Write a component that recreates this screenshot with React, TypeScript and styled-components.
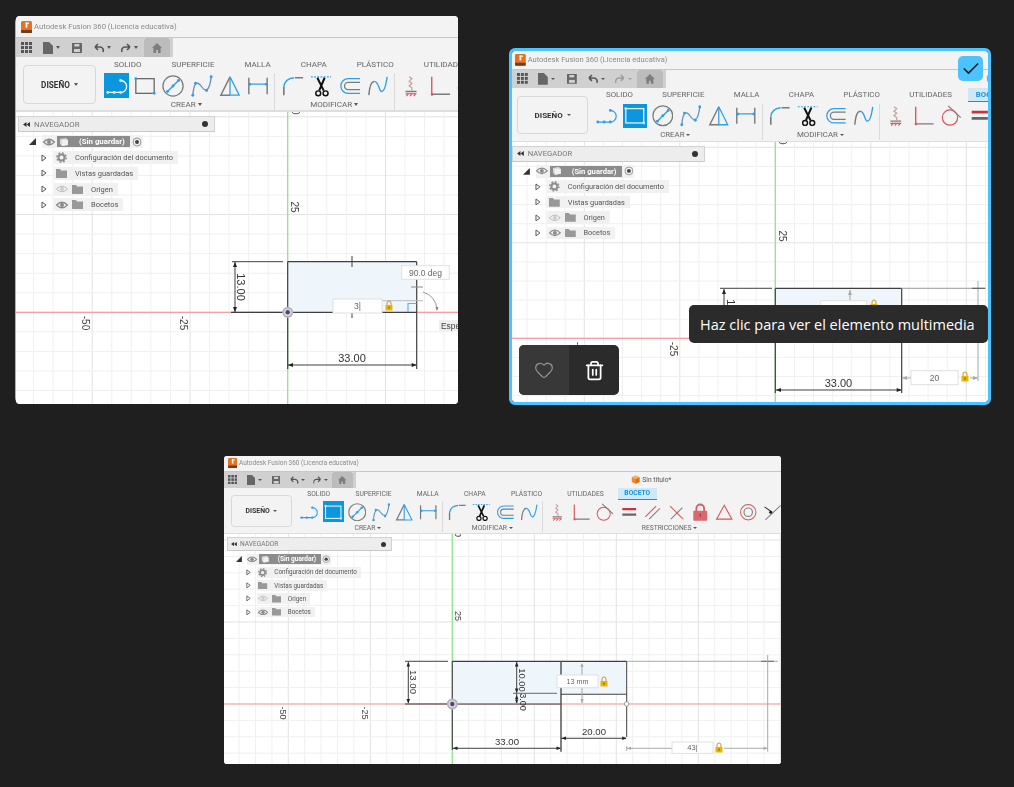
import React from "react";
import styled, { createGlobalStyle } from "styled-components";
import { Check, Heart, Trash2 } from "lucide-react";

const Global = createGlobalStyle`
  html, body { margin: 0; padding: 0; background: #1f1f1f; }
  body { font-family: Roboto, "Liberation Sans", Arial, sans-serif; }
`;

const Page = styled.div`
  width: 1014px;
  height: 787px;
  box-sizing: border-box;
  padding: 16px 0 0 15px;
  overflow: hidden;
`;
const TopRow = styled.div`
  display: flex;
  align-items: flex-start;
`;
const BottomRow = styled.div`
  margin: 51px 0 0 209px;
`;
const Card = styled.div<{ $w: number; $h: number; $selected?: boolean; $edge?: boolean; $ml?: number; $mt?: number }>`
  position: relative;
  flex: none;
  box-sizing: border-box;
  width: ${(p) => p.$w}px;
  height: ${(p) => p.$h}px;
  margin-left: ${(p) => p.$ml ?? 0}px;
  margin-top: ${(p) => p.$mt ?? 0}px;
  border-radius: 6px;
  border: ${(p) => (p.$selected ? "3px solid #4cc2ff" : "none")};
  ${(p) => (p.$edge ? "border-left: 1px solid #aebf83;" : "")}
`;
const Frame = styled.div<{ $s: number; $w: number; $h: number }>`
  zoom: ${(p) => p.$s};
  width: ${(p) => p.$w}px;
  height: ${(p) => p.$h}px;
  display: flex;
  flex-direction: column;
  overflow: hidden;
  background: #fff;
  border-radius: 4px;
  filter: blur(0.4px);
`;
const TitleBar = styled.div<{ $h: number; $pl: number }>`
  flex: none;
  height: ${(p) => p.$h}px;
  box-sizing: border-box;
  display: flex;
  align-items: center;
  gap: 2px;
  padding-left: ${(p) => p.$pl}px;
  background: #f3f3f3;
  border-bottom: 1px solid #c6c6c6;
  color: #8a8a8a;
  font-size: 7.7px;
  white-space: nowrap;
`;
const QuickBar = styled.div`
  flex: none;
  height: 19px;
  display: flex;
  background: #f3f3f3;
`;
const QuickTools = styled.div`
  width: 128px;
  height: 19px;
  flex: none;
  display: flex;
  align-items: center;
  background: #d0d0d0;
  box-sizing: border-box;
  padding-left: 5px;
`;
const HomeTab = styled.div`
  width: 26px;
  flex: none;
  display: flex;
  align-items: center;
  justify-content: center;
  background: #bcbcbc;
  border-radius: 2px 2px 0 0;
`;
const HomeGap = styled.div`
  width: 3px;
  flex: none;
  background: #d0d0d0;
`;
const DocTitle = styled.div`
  margin-left: 327px;
  display: flex;
  align-items: center;
  gap: 3px;
  white-space: nowrap;
  color: #555;
  font-size: 8px;
`;
const QuickSlot = styled.span<{ $ml?: number; $faded?: boolean }>`
  display: inline-flex;
  align-items: center;
  gap: 3px;
  margin-left: ${(p) => p.$ml ?? 0}px;
  opacity: ${(p) => (p.$faded ? 0.4 : 1)};
`;
const TinyCaret = styled.i`
  display: block;
  width: 0;
  height: 0;
  border-left: 2.5px solid transparent;
  border-right: 2.5px solid transparent;
  border-top: 3px solid #555;
`;
const Ribbon = styled.div`
  flex: none;
  height: 55px;
  box-sizing: border-box;
  display: flex;
  background: #f3f3f3;
  border-bottom: 2px solid #dedede;
`;
const DesignButton = styled.div<{ $ml: number; $mr: number }>`
  flex: none;
  box-sizing: border-box;
  width: 73px;
  height: 39px;
  margin: 8px ${(p) => p.$mr}px 0 ${(p) => p.$ml}px;
  display: flex;
  align-items: center;
  justify-content: center;
  gap: 4px;
  border: 1px solid #d8d8d8;
  border-radius: 4px;
  color: #333;
  font-size: 8.2px;
  font-weight: 700;
`;
const RibbonBody = styled.div`
  flex: 1;
  min-width: 0;
  display: flex;
  flex-direction: column;
`;
const Tabs = styled.div<{ $ml: number }>`
  height: 15px;
  display: flex;
  align-items: stretch;
  margin-left: ${(p) => p.$ml}px;
  white-space: nowrap;
`;
const Tab = styled.div<{ $active?: boolean }>`
  flex: none;
  display: flex;
  align-items: center;
  box-sizing: border-box;
  height: 14px;
  padding: 0 ${(p) => (p.$active ? "7.5px" : "15px")};
  ${(p) => (p.$active ? "margin-left: 2px;" : "")}
  font-size: 8px;
  color: ${(p) => (p.$active ? "#1493dc" : "#666")};
  font-weight: ${(p) => (p.$active ? 700 : 400)};
  background: ${(p) => (p.$active ? "#cfe8f7" : "transparent")};
  border-bottom: ${(p) => (p.$active ? "2px solid #1493dc" : "none")};
`;
const Tools = styled.div<{ $shift: number }>`
  display: flex;
  margin-left: ${(p) => p.$shift}px;
  margin-top: 1px;
`;
const Group = styled.div<{ $pl?: number; $sep?: boolean; $cells: number }>`
  flex: none;
  width: ${(p) => p.$cells * 28.4}px;
  padding-left: ${(p) => p.$pl ?? 0}px;
  ${(p) => (p.$sep ? "border-right: 1px solid #dadada;" : "")}
  height: 37px;
`;
const IconRow = styled.div`
  display: flex;
  height: 25px;
`;
const ToolCell = styled.div<{ $active?: boolean }>`
  flex: none;
  width: 25px;
  height: 25px;
  margin-right: 3.4px;
  display: flex;
  align-items: center;
  justify-content: center;
  background: ${(p) => (p.$active ? "#0b96dd" : "transparent")};
`;
const GroupLabel = styled.div<{ $pr?: number; $pl?: number }>`
  display: flex;
  align-items: center;
  justify-content: center;
  gap: 2px;
  height: 13px;
  padding-right: ${(p) => p.$pr ?? 0}px;
  padding-left: ${(p) => p.$pl ?? 0}px;
  font-size: 8px;
  color: #666;
`;
const Viewport = styled.div`
  position: relative;
  flex: 1;
  min-height: 0;
  overflow: hidden;
  background: #fff;
`;
const SketchSvg = styled.svg`
  position: absolute;
  inset: 0;
  width: 100%;
  height: 100%;
`;
const Navigator = styled.div<{ $left: number }>`
  position: absolute;
  left: ${(p) => p.$left}px;
  top: 4px;
  width: 197px;
`;
const NavHeader = styled.div`
  box-sizing: border-box;
  height: 16px;
  display: flex;
  align-items: center;
  padding: 0 6px 0 4px;
  gap: 4px;
  background: #ededed;
  border: 1px solid #d2d2d2;
  border-bottom-color: #c8c8c8;
  color: #777;
  font-size: 7.8px;
`;
const NavTitle = styled.span`
  flex: 1;
`;
const NavPin = styled.i`
  width: 6px;
  height: 6px;
  border-radius: 50%;
  background: #333;
`;
const Tree = styled.div`
  margin-top: 2px;
`;
const TreeRow = styled.div<{ $pl: number }>`
  height: 15.75px;
  display: flex;
  align-items: center;
  padding-left: ${(p) => p.$pl}px;
`;
const Chip = styled.div<{ $ml: number; $pad?: number }>`
  height: 13px;
  display: flex;
  align-items: center;
  margin-left: ${(p) => p.$ml}px;
  padding: 0 ${(p) => p.$pad ?? 5}px 0 ${(p) => p.$pad ?? 2}px;
  background: #f1f1f1;
  color: #555;
  font-size: 7.5px;
  white-space: nowrap;
`;
const ChipText = styled.span<{ $ml: number }>`
  display: inline-flex;
  margin-left: ${(p) => p.$ml}px;
`;
const RootBox = styled.div`
  width: 73px;
  height: 11px;
  margin: 0 2px;
  box-sizing: border-box;
  padding-left: 2px;
  display: flex;
  align-items: center;
  background: #8c8c8c;
  color: #fff;
  font-size: 7.8px;
  font-weight: 700;
`;
const RootText = styled.span`
  margin-left: 10px;
`;
const CheckBadge = styled.div`
  position: absolute;
  left: 446px;
  top: 5px;
  width: 25px;
  height: 25px;
  border-radius: 5px;
  background: #4cc2ff;
  display: flex;
  align-items: center;
  justify-content: center;
  color: #10212b;
`;
const Tooltip = styled.div`
  position: absolute;
  left: 177px;
  top: 254px;
  width: 299px;
  height: 38px;
  box-sizing: border-box;
  border-radius: 5px;
  background: #2b2b2b;
  color: #fff;
  display: flex;
  align-items: center;
  padding-left: 11px;
  font-family: "Open Sans", "Noto Sans", sans-serif;
  font-size: 14.5px;
  white-space: nowrap;
`;
const ActionBar = styled.div`
  position: absolute;
  left: 7px;
  top: 294px;
  width: 100px;
  height: 50px;
  display: flex;
  border-radius: 5px;
  overflow: hidden;
  background: #2b2b2b;
`;
const ActionButton = styled.div<{ $tone?: boolean }>`
  width: 50px;
  display: flex;
  align-items: center;
  justify-content: center;
  background: ${(p) => (p.$tone ? "#383838" : "transparent")};
  color: ${(p) => (p.$tone ? "#8f8f8f" : "#fff")};
`;

const B = "#2f9fe8";
const G = "#7b7b7b";
const R = "#d9545b";

const Dots = ({ pts, c = B }: { pts: number[][]; c?: string }) => (
  <>
    {pts.map(([x, y], i) => (
      <circle key={i} cx={x} cy={y} r={1.6} fill={c} />
    ))}
  </>
);
const I = ({ children, size = 22 }: { children: React.ReactNode; size?: number }) => (
  <svg width={size} height={size} viewBox="0 0 24 24" fill="none" strokeWidth={1.4}>
    {children}
  </svg>
);
const LineTool = ({ on }: { on?: boolean }) => (
  <I>
    <path d="M2 19 H16 a6.5 6.5 0 0 0 0-13" stroke={on ? "#fff" : B} />
    <Dots pts={[[2, 19], [9, 19], [16, 19], [16, 6]]} c={on ? "#cdeaff" : B} />
  </I>
);
const RectTool = ({ on }: { on?: boolean }) => (
  <I>
    <rect x="2" y="4" width="20" height="16" stroke={on ? "#e4f4ff" : "#666"} />
    <Dots pts={[[2, 4], [22, 20]]} c={on ? "#bfe6ff" : B} />
  </I>
);
const CircleTool = () => (
  <I>
    <circle cx="12" cy="12" r="11" stroke={G} />
    <path d="M6 18 L18 6" stroke={B} strokeWidth={1.6} />
    <Dots pts={[[6, 18], [12, 12], [18, 6]]} />
  </I>
);
const SplineTool = () => (
  <I>
    <path d="M2 22 C3 8 7 6 11 12 S 20 20 22 2" stroke="#5f8fb5" />
    <Dots pts={[[2, 22], [5, 9], [17, 17], [22, 2]]} />
  </I>
);
const TriTool = () => (
  <I>
    <path d="M12 2 L2 22 H12" stroke={G} strokeWidth={1.6} />
    <path d="M12 2 L22 22 H12 Z" stroke={B} strokeWidth={1.4} />
  </I>
);
const HTool = () => (
  <I>
    <path d="M2 3 V21 M22 3 V21" stroke={G} strokeWidth={1.6} />
    <path d="M2 10 H22" stroke={B} />
    <Dots pts={[[3, 10], [21, 10]]} />
  </I>
);
const FilletTool = () => (
  <I>
    <path d="M2 22 V13" stroke={G} strokeWidth={1.8} />
    <path d="M2 13 Q3 4 13 3" stroke={B} strokeWidth={1.6} />
    <path d="M14 3 H23" stroke={G} strokeWidth={1.6} />
  </I>
);
const ScissorsTool = () => (
  <I>
    <path d="M1 2 H23" stroke={B} strokeDasharray="2 1.5" strokeWidth={1.2} />
    <path d="M8 3 L15 17 M16 3 L10 17" stroke="#111" strokeWidth={2.2} />
    <circle cx="9" cy="20" r="2.7" stroke="#111" strokeWidth={1.6} />
    <circle cx="17" cy="20" r="2.7" stroke="#111" strokeWidth={1.6} />
  </I>
);
const OffsetTool = () => (
  <I>
    <path d="M23 4 H10 a8 8 0 0 0 0 16 H23" stroke={B} strokeWidth={1.4} />
    <path d="M23 8 H10 a4 4 0 0 0 0 8 H23" stroke={G} strokeWidth={1.4} />
  </I>
);
const CurveTool = () => (
  <I>
    <path d="M2 22 C3 10 5 7 8 7" stroke={G} strokeWidth={1.6} />
    <path d="M8 7 C13 7 13 18 16 18 C20 18 21 8 22 2" stroke={B} strokeWidth={1.5} />
  </I>
);
const FixTool = () => (
  <I>
    <path d="M10 2 L13 4 L10 7 L13 9 L10 12 L13 14 V17" stroke="#c9a0a0" strokeWidth={1.4} />
    <path d="M6 18 H18" stroke={G} strokeWidth={1.4} />
    <path d="M6 20.5 H18 M7 23 L9 20.5 M11 23 L13 20.5 M15 23 L17 20.5" stroke={R} strokeWidth={1.2} />
  </I>
);
const CoincidentTool = () => (
  <I>
    <path d="M3 2 V21" stroke={R} strokeWidth={1.5} />
    <path d="M3 21 H23" stroke={G} strokeWidth={1.5} />
    <rect x="2" y="20" width="2.4" height="2.4" fill={R} />
  </I>
);
const TangentTool = () => (
  <I>
    <circle cx="10" cy="14" r="8.5" stroke={R} strokeWidth={1.3} />
    <path d="M8 1 L22 14" stroke={G} strokeWidth={1.3} />
  </I>
);
const EqualTool = () => (
  <I>
    <path d="M3 8 H21" stroke="#c8353d" strokeWidth={3} />
    <path d="M3 15 H21" stroke="#666" strokeWidth={3} />
  </I>
);
const ParallelTool = () => (
  <I>
    <path d="M3 18 L17 4" stroke={R} strokeWidth={1.3} />
    <path d="M8 21 L22 7" stroke={G} strokeWidth={1.3} />
  </I>
);
const PerpTool = () => (
  <I>
    <path d="M4 4 L21 21" stroke={R} strokeWidth={1.3} />
    <path d="M5 21 L20 6" stroke={G} strokeWidth={1.3} />
  </I>
);
const LockTool = () => (
  <I>
    <path d="M7 11 V7 a5 5 0 0 1 10 0 V11" stroke="#d0606a" strokeWidth={2.4} />
    <rect x="3" y="10" width="18" height="13" rx="1" fill="#d9686f" />
    <path d="M12 14 V18" stroke="#8d2f36" strokeWidth={1.3} />
  </I>
);
const TriangleTool = () => (
  <I>
    <path d="M12 3 L22 21 H2 Z" stroke={R} strokeWidth={1.4} />
  </I>
);
const ConcentricTool = () => (
  <I>
    <circle cx="12" cy="12" r="10" stroke={R} strokeWidth={1.3} />
    <circle cx="12" cy="12" r="5.5" stroke="#888" strokeWidth={1.6} />
  </I>
);
const MidTool = () => (
  <I>
    <path d="M2 5 L12 12" stroke="#333" strokeWidth={1.3} />
    <path d="M3 22 L23 3" stroke={G} strokeWidth={1.3} />
    <circle cx="10" cy="12" r="2" fill="#222" />
  </I>
);

const DocCube = () => (
  <svg width="11" height="11" viewBox="0 0 12 12">
    <path d="M6 0.5 L11 3 V9 L6 11.5 L1 9 V3 Z" fill="#f08a2c" />
    <path d="M6 0.5 L11 3 L6 5.5 L1 3 Z" fill="#f8b066" />
    <path d="M6 5.5 L11 3 V9 L6 11.5 Z" fill="#d96f12" />
  </svg>
);
const FusionLogo = () => (
  <svg width="11" height="12" viewBox="0 0 11 12">
    <rect width="11" height="12" rx="1.5" fill="#e8701f" />
    <rect y="9" width="11" height="3" fill="#3a2a20" opacity="0.7" />
    <rect x="4.6" y="1.6" width="1.8" height="5" fill="#fff" />
    <rect x="4.6" y="1.6" width="3.4" height="1.3" fill="#fff" />
  </svg>
);
const GridIcon = () => (
  <svg width="11" height="11" viewBox="0 0 11 11" fill="#555">
    {[0, 4, 8].map((x) => [0, 4, 8].map((y) => <rect key={x + "-" + y} x={x} y={y} width="3" height="3" />))}
  </svg>
);
const FileIcon = () => (
  <svg width="10" height="12" viewBox="0 0 10 12"><path d="M0 0 H6 L10 4 V12 H0 Z" fill="#666" /></svg>
);
const SaveIcon = () => (
  <svg width="10" height="10" viewBox="0 0 10 10" fill="none"><path d="M0 0 H10 V10 H0 Z" fill="#666" /><rect x="2.4" y="1" width="5" height="2.5" fill="#d0d0d0" /><rect x="2" y="6" width="6" height="3" fill="#d0d0d0" /></svg>
);
const UndoIcon = ({ flip }: { flip?: boolean }) => (
  <svg width="10" height="10" viewBox="0 0 10 10" fill="none" stroke="#555" strokeWidth="1.6" style={flip ? { transform: "scaleX(-1)" } : undefined}>
    <path d="M1 4 L4 1 M1 4 L4 7 M1 4 H6 a3.5 3.5 0 0 1 3 5" />
  </svg>
);
const HomeIcon = () => (
  <svg width="10" height="10" viewBox="0 0 10 10"><path d="M5 0 L10 5 H8.6 V10 H6 V7 H4 V10 H1.4 V5 H0 Z" fill="#7d7d7d" /></svg>
);
const NavBack = () => (
  <svg width="7" height="5" viewBox="0 0 7 5"><path d="M3.5 0 L0 2.5 L3.5 5 Z M7 0 L3.5 2.5 L7 5 Z" fill="#333" /></svg>
);
const RootCaret = () => (
  <svg width="7" height="7" viewBox="0 0 7 7"><path d="M7 0 V7 H0 Z" fill="#333" /></svg>
);
const Chevron = () => (
  <svg width="6" height="8" viewBox="0 0 6 8" fill="none"><path d="M1 1 L5 4 L1 7 Z" stroke="#555" /></svg>
);
const Eye = ({ off }: { off?: boolean }) => (
  <svg width="12" height="8" viewBox="0 0 12 8" fill="none">
    <path d="M0.5 4 Q6 -1.5 11.5 4 Q6 9.5 0.5 4 Z" stroke={off ? "#bbb" : "#888"} strokeWidth={off ? 1 : 1.2} />
    <circle cx="6" cy="4" r="2" fill={off ? "#ccc" : "#888"} />
  </svg>
);
const Folder = () => (
  <svg width="11" height="9" viewBox="0 0 11 9"><path d="M0 0 H4 L5 1.5 H11 V9 H0 Z" fill="#999" /></svg>
);
const Gear = () => (
  <svg width="11" height="11" viewBox="0 0 11 11" fill="none"><circle cx="5.5" cy="5.5" r="3" stroke="#8f8f8f" strokeWidth="2" /><circle cx="5.5" cy="5.5" r="4.6" stroke="#8f8f8f" strokeWidth="1.6" strokeDasharray="1.8 1.8" /></svg>
);
const RootCube = () => (
  <svg width="10" height="10" viewBox="0 0 10 10"><path d="M1 2 L7 1 L9 3 V8 L3 9 L1 7 Z" fill="#d9d9d9" /><path d="M3 9 V3 L9 3 V8 Z" fill="#f1f1f1" /></svg>
);
const Radio = () => (
  <svg width="10" height="10" viewBox="0 0 10 10" fill="none"><circle cx="5" cy="5" r="4" stroke="#999" /><circle cx="5" cy="5" r="2" fill="#444" /></svg>
);

const TAB_NAMES = ["SOLIDO", "SUPERFICIE", "MALLA", "CHAPA", "PLÁSTICO", "UTILIDADES"];

type BarProps = { active: "line" | "rect"; tabsMl: number; shift: number; dl: number; dr: number };
const Toolbar = ({ active, tabsMl, shift, dl, dr }: BarProps) => (
  <Ribbon>
    <DesignButton $ml={dl} $mr={dr}>DISEÑO <TinyCaret /></DesignButton>
    <RibbonBody>
      <Tabs $ml={tabsMl}>
        {TAB_NAMES.map((t) => (
          <Tab key={t}>{t}</Tab>
        ))}
        <Tab $active>BOCETO</Tab>
      </Tabs>
      <Tools $shift={shift}>
        <Group $cells={6} $sep>
          <IconRow>
            <ToolCell $active={active === "line"}><LineTool on={active === "line"} /></ToolCell>
            <ToolCell $active={active === "rect"}><RectTool on={active === "rect"} /></ToolCell>
            <ToolCell><CircleTool /></ToolCell>
            <ToolCell><SplineTool /></ToolCell>
            <ToolCell><TriTool /></ToolCell>
            <ToolCell><HTool /></ToolCell>
          </IconRow>
          <GroupLabel $pr={6}>CREAR <TinyCaret /></GroupLabel>
        </Group>
        <Group $cells={4} $pl={5} $sep>
          <IconRow>
            <ToolCell><FilletTool /></ToolCell>
            <ToolCell><ScissorsTool /></ToolCell>
            <ToolCell><OffsetTool /></ToolCell>
            <ToolCell><CurveTool /></ToolCell>
          </IconRow>
          <GroupLabel $pr={6}>MODIFICAR <TinyCaret /></GroupLabel>
        </Group>
        <Group $cells={10} $pl={4}>
          <IconRow>
            <ToolCell><FixTool /></ToolCell>
            <ToolCell><CoincidentTool /></ToolCell>
            <ToolCell><TangentTool /></ToolCell>
            <ToolCell><EqualTool /></ToolCell>
            <ToolCell><ParallelTool /></ToolCell>
            <ToolCell><PerpTool /></ToolCell>
            <ToolCell><LockTool /></ToolCell>
            <ToolCell><TriangleTool /></ToolCell>
            <ToolCell><ConcentricTool /></ToolCell>
            <ToolCell><MidTool /></ToolCell>
          </IconRow>
          <GroupLabel $pl={8}>RESTRICCIONES <TinyCaret /></GroupLabel>
        </Group>
      </Tools>
    </RibbonBody>
  </Ribbon>
);

const NavTree = ({ left }: { left: number }) => (
  <Navigator $left={left}>
    <NavHeader><NavBack /><NavTitle>NAVEGADOR</NavTitle><NavPin /></NavHeader>
    <Tree>
      <TreeRow $pl={11}>
        <RootCaret />
        <Chip $ml={6} $pad={1}>
          <Eye /><RootBox><RootCube /><RootText>(Sin guardar)</RootText></RootBox><Radio />
        </Chip>
      </TreeRow>
      <TreeRow $pl={23}><Chevron /><Chip $ml={7}><Gear /><ChipText $ml={8}>Configuración del documento</ChipText></Chip></TreeRow>
      <TreeRow $pl={23}><Chevron /><Chip $ml={7}><Folder /><ChipText $ml={8}>Vistas guardadas</ChipText></Chip></TreeRow>
      <TreeRow $pl={23}><Chevron /><Chip $ml={7}><Eye off /><ChipText $ml={4}><Folder /></ChipText><ChipText $ml={8}>Origen</ChipText></Chip></TreeRow>
      <TreeRow $pl={23}><Chevron /><Chip $ml={7}><Eye /><ChipText $ml={4}><Folder /></ChipText><ChipText $ml={8}>Bocetos</ChipText></Chip></TreeRow>
    </Tree>
  </Navigator>
);

const INK = "#3f3f3f";
const LIGHT = "#a8a8a8";

const GridLines = ({ ox, oy, d, x0, x1, y0, y1 }: { ox: number; oy: number; d: number; x0: number; x1: number; y0: number; y1: number }) => {
  const out: React.ReactNode[] = [];
  for (let i = -40; i <= 40; i++) {
    const x = ox + i * d;
    const y = oy + i * d;
    const c = i % 5 === 0 ? "#e2e2e2" : "#f0f0f0";
    if (x >= x0 && x <= x1) out.push(<line key={"v" + i} x1={x} x2={x} y1={y0} y2={y1} stroke={c} strokeWidth={1} />);
    if (y >= y0 && y <= y1) out.push(<line key={"h" + i} x1={x0} x2={x1} y1={y} y2={y} stroke={c} strokeWidth={1} />);
  }
  return (
    <>
      {out}
      <line x1={ox} x2={ox} y1={y0} y2={y1} stroke="#8fe08f" strokeWidth={1.2} />
      <line x1={x0} x2={x1} y1={oy} y2={oy} stroke="#f3a0a0" strokeWidth={1.2} />
    </>
  );
};
const Arr = ({ x, y, dir, c = "#222", s = 5 }: { x: number; y: number; dir: "l" | "r" | "u" | "d"; c?: string; s?: number }) => {
  const w = s * 0.4;
  const p = dir === "l" ? `${x},${y} ${x + s},${y - w} ${x + s},${y + w}`
    : dir === "r" ? `${x},${y} ${x - s},${y - w} ${x - s},${y + w}`
    : dir === "u" ? `${x},${y} ${x - w},${y + s} ${x + w},${y + s}`
    : `${x},${y} ${x - w},${y - s} ${x + w},${y - s}`;
  return <polygon points={p} fill={c} />;
};
const L = ({ a, b, c, d, col = INK, w = 1 }: { a: number; b: number; c: number; d: number; col?: string; w?: number }) => (
  <line x1={a} y1={b} x2={c} y2={d} stroke={col} strokeWidth={w} />
);
const Txt = ({ x, y, t, size = 10.5, col = "#333", rot }: { x: number; y: number; t: string; size?: number; col?: string; rot?: boolean }) => (
  <text x={x} y={y} fontSize={size} fill={col} textAnchor="middle" dominantBaseline="central" fontFamily="Liberation Sans, sans-serif" transform={rot ? `rotate(90 ${x} ${y})` : undefined}>{t}</text>
);
const Input = ({ x, y, w, h, t, size = 8.5 }: { x: number; y: number; w: number; h: number; t: string; size?: number }) => (
  <>
    <rect x={x} y={y} width={w} height={h} fill="#fff" stroke="#e0e0e0" />
    <Txt x={x + w / 2} y={y + h / 2} t={t} size={size} col="#666" />
  </>
);
const Padlock = ({ x, y }: { x: number; y: number }) => (
  <>
    <path d={`M${x - 2} ${y} v-2 a2 2 0 0 1 4 0 v2`} fill="none" stroke="#c99a10" strokeWidth={1} />
    <rect x={x - 3.5} y={y} width={7} height={5.5} rx={0.6} fill="#eab308" />
    <rect x={x - 0.5} y={y + 1.6} width={1} height={2} fill="#6a4d00" />
  </>
);
const Origin = ({ x, y }: { x: number; y: number }) => (
  <>
    <circle cx={x} cy={y} r={5.5} fill="#b5b5b5" />
    <circle cx={x} cy={y} r={3.6} fill="#dcdcdc" />
    <circle cx={x} cy={y} r={2.2} fill="#54408a" />
  </>
);

const SketchOne = () => (
  <SketchSvg viewBox="16 112 442 292" preserveAspectRatio="none">
    <GridLines ox={287.7} oy={312.3} d={19.55} x0={16} x1={458} y0={112} y1={404} />
    <Txt x={295} y={109} t="50" rot size={10} col="#444" />
    <Txt x={294} y={207} t="25" rot size={10} col="#444" />
    <Txt x={85} y={323} t="-50" rot size={10} col="#444" />
    <Txt x={183} y={323} t="-25" rot size={10} col="#444" />
    <rect x={287.7} y={261.7} width={129} height={50.6} fill="#eef6fc" />
    <L a={287.7} b={261.7} c={416.7} d={261.7} w={1.2} />
    <L a={287.7} b={261.7} c={287.7} d={369} w={1.2} />
    <L a={416.7} b={261.7} c={416.7} d={369} w={1.2} />
    <L a={231} b={312.3} c={416.7} d={312.3} w={1.2} />
    <L a={232} b={261.7} c={283} d={261.7} />
    <L a={235} b={262} c={235} d={312} />
    <Arr x={235} y={262} dir="u" />
    <Arr x={235} y={312} dir="d" />
    <Txt x={241} y={287} t="13.00" rot size={11} />
    <L a={288} b={365} c={416} d={365} />
    <Arr x={288} y={365} dir="l" />
    <Arr x={416.7} y={365} dir="r" />
    <Txt x={352} y={358} t="33.00" size={11} />
    <L a={352} b={256} c={352} d={267} />
    <L a={352} b={313} c={352} d={318} />
    <L a={411} b={287} c={423} d={287} col="#888" />
    <L a={382} b={300.7} c={423} d={300.7} col="#bbb" />
    <path d="M423 292 Q436 296 437 310" fill="none" stroke="#999" />
    <Arr x={437} y={311} dir="d" c="#888" s={4} />
    <path d="M408 312 V303.5 H416.5" fill="none" stroke="#56b6f2" strokeWidth={1.2} />
    <Input x={333} y={299} w={49} h={14} t="3|" />
    <Padlock x={389} y={305} />
    <Input x={401.7} y={265.7} w={47.6} h={13.6} t="90.0 deg" />
    <rect x={439} y={320} width={30} height={11} fill="#efefef" />
    <text x={441} y={328.5} fontSize={8.4} fill="#444" fontFamily="Liberation Sans, sans-serif">Espe</text>
    <Origin x={287.7} y={312.3} />
  </SketchSvg>
);
const SketchTwo = () => (
  <SketchSvg viewBox="512 142 476 260" preserveAspectRatio="none">
    <GridLines ox={775.3} oy={338.3} d={19.1} x0={512} x1={988} y0={142} y1={402} />
    <Txt x={782} y={139} t="50" rot size={10} col="#444" />
    <Txt x={782} y={236} t="25" rot size={10} col="#444" />
    <Txt x={578} y={349} t="-50" rot size={10} col="#444" />
    <Txt x={673} y={349} t="-25" rot size={10} col="#444" />
    <rect x={775.3} y={288.3} width={126.4} height={50} fill="#eef6fc" />
    <L a={775.3} b={288.3} c={901.7} d={288.3} w={1.2} />
    <L a={775.3} b={288.3} c={775.3} d={393} w={1.2} />
    <L a={901.7} b={288.3} c={901.7} d={393} w={1.2} />
    <L a={720} b={288.3} c={772} d={288.3} />
    <L a={724} b={289} c={724} d={340} />
    <Arr x={724} y={289} dir="u" />
    <Txt x={731} y={313} t="13.00" rot size={11} />
    <L a={901.7} b={288.3} c={985.7} d={288.3} col="#999" />
    <L a={978} b={281} c={978} d={381} col={LIGHT} />
    <L a={972} b={288.3} c={985} d={288.3} col="#555" />
    <rect x={820.7} y={300.7} width={46} height={14} fill="#fff" stroke="#e0e0e0" />
    <L a={850} b={290} c={850} d={300} col={LIGHT} />
    <Arr x={850} y={290} dir="u" c={LIGHT} />
    <Padlock x={874} y={304} />
    <L a={776} b={390} c={901} d={390} />
    <Arr x={776} y={390} dir="l" />
    <Arr x={901.7} y={390} dir="r" />
    <Txt x={838.5} y={382.7} t="33.00" size={11} />
    <L a={902} b={378} c={911} d={378} col={LIGHT} />
    <Arr x={902} y={378} dir="l" c={LIGHT} />
    <Input x={911} y={370.7} w={47} h={14} t="20" />
    <Padlock x={965} y={376} />
    <L a={970} b={378} c={978} d={378} col={LIGHT} />
    <Arr x={978} y={378} dir="r" c={LIGHT} />
  </SketchSvg>
);
const SketchThree = () => (
  <SketchSvg viewBox="224 534 557 230" preserveAspectRatio="none">
    <GridLines ox={452.3} oy={704} d={16.4} x0={224} x1={781} y0={534} y1={764} />
    <Txt x={458} y={532} t="50" rot size={9} col="#444" />
    <Txt x={458} y={616} t="25" rot size={9} col="#444" />
    <Txt x={283} y={713} t="-50" rot size={9} col="#444" />
    <Txt x={365} y={713} t="-25" rot size={9} col="#444" />
    <rect x={452.3} y={661.3} width={108.7} height={42.7} fill="#eef6fc" />
    <rect x={561} y={661.3} width={65.7} height={33} fill="#eef6fc" />
    <L a={452.3} b={661.3} c={626.7} d={661.3} w={1.2} />
    <L a={452.3} b={704} c={561} d={704} w={1.2} />
    <L a={452.3} b={661.3} c={452.3} d={750} w={1.1} />
    <L a={561} b={661.3} c={561} d={751.7} col="#555" w={1.5} />
    <L a={626.7} b={661.3} c={626.7} d={737} w={1} />
    <L a={626.7} b={746} c={626.7} d={751} col={LIGHT} />
    <L a={561} b={694.3} c={626.7} d={694.3} w={1.1} />
    <L a={627} b={661.3} c={778} d={661.3} col={LIGHT} />
    <L a={761} b={661.3} c={774} d={661.3} col="#666" />
    <L a={767.7} b={655} c={767.7} d={751.7} col={LIGHT} />
    <L a={405} b={661.3} c={448} d={661.3} />
    <L a={405} b={704} c={452} d={704} />
    <L a={408.3} b={662} c={408.3} d={703} />
    <Arr x={408.3} y={662} dir="u" s={4.5} />
    <Arr x={408.3} y={703.5} dir="d" s={4.5} />
    <Txt x={413.5} y={682} t="13.00" rot size={9.6} />
    <L a={516.7} b={662} c={516.7} d={703} />
    <Arr x={516.7} y={662} dir="u" s={4.5} />
    <Arr x={516.7} y={693} dir="d" s={4.5} />
    <Arr x={516.7} y={695} dir="u" s={4} />
    <Arr x={516.7} y={703.5} dir="d" s={4} />
    <L a={513} b={693.3} c={557} d={693.3} col="#666" />
    <Txt x={522.5} y={680} t="10.00" rot size={9.4} />
    <Txt x={522.5} y={702} t="3.00" rot size={9} />
    <L a={453} b={748.3} c={560} d={748.3} />
    <Arr x={453} y={748.3} dir="l" s={4.5} />
    <Arr x={561} y={748.3} dir="r" s={4.5} />
    <Txt x={507} y={742} t="33.00" size={9.6} />
    <L a={561} b={738.3} c={626} d={738.3} />
    <Arr x={561.5} y={738.3} dir="l" s={4.5} />
    <Arr x={626.7} y={738.3} dir="r" s={4.5} />
    <Txt x={594} y={732} t="20.00" size={9.6} />
    <L a={582} b={664} c={582} d={703} col={LIGHT} />
    <Arr x={582} y={663} dir="u" c={LIGHT} s={4} />
    <Arr x={582} y={703} dir="d" c={LIGHT} s={4} />
    <Input x={557} y={675} w={41} h={12.7} t="13 mm" size={7.2} />
    <Padlock x={604} y={681} />
    <circle cx={626.7} cy={704} r={2.3} fill="#fff" stroke="#999" />
    <L a={627} b={748.3} c={672} d={748.3} col={LIGHT} />
    <L a={724} b={748.3} c={767} d={748.3} col={LIGHT} />
    <Arr x={627} y={748.3} dir="l" c={LIGHT} s={4} />
    <Arr x={767.7} y={748.3} dir="r" c={LIGHT} s={4} />
    <Input x={672} y={742} w={41} h={11.4} t="43|" size={7.6} />
    <Padlock x={719} y={747} />
    <Origin x={452.3} y={704} />
  </SketchSvg>
);

type WinProps = BarProps & {
  s: number;
  w: number;
  h: number;
  titleH: number;
  titlePl: number;
  navLeft: number;
  fadedRedo?: boolean;
  children: React.ReactNode;
};
const Win = ({ s, w, h, titleH, titlePl, navLeft, fadedRedo, children, ...bar }: WinProps) => (
  <Frame $s={s} $w={w / s} $h={h / s}>
    <TitleBar $h={titleH} $pl={titlePl}><FusionLogo /> Autodesk Fusion 360 (Licencia educativa)</TitleBar>
    <QuickBar>
      <QuickTools>
        <GridIcon />
        <QuickSlot $ml={11}><FileIcon /><TinyCaret /></QuickSlot>
        <QuickSlot $ml={12}><SaveIcon /></QuickSlot>
        <QuickSlot $ml={12}><UndoIcon /><TinyCaret /></QuickSlot>
        <QuickSlot $ml={10} $faded={fadedRedo}><UndoIcon flip /><TinyCaret /></QuickSlot>
      </QuickTools>
      <HomeTab><HomeIcon /></HomeTab>
      <HomeGap />
      <DocTitle><DocCube /> Sin título*</DocTitle>
    </QuickBar>
    <Toolbar {...bar} />
    <Viewport>
      {children}
      <NavTree left={navLeft} />
    </Viewport>
  </Frame>
);

export default function App() {
  return (
    <Page>
      <Global />
      <TopRow>
        <Card $w={443} $h={388} $edge>
          <Win s={1} w={442} h={388} titleH={22} titlePl={5} navLeft={2} active="line" tabsMl={-5} shift={0} dl={7} dr={8}>
            <SketchOne />
          </Win>
        </Card>
        <Card $w={482} $h={357} $ml={51} $mt={32} $selected>
          <Win s={0.98} w={476} h={351} titleH={18.9} titlePl={3} navLeft={0} active="rect" tabsMl={-8} shift={-4.5} dl={5} dr={11} fadedRedo>
            <SketchTwo />
          </Win>
          <CheckBadge><Check size={20} strokeWidth={2} /></CheckBadge>
          <Tooltip>Haz clic para ver el elemento multimedia</Tooltip>
          <ActionBar>
            <ActionButton $tone><Heart size={20} strokeWidth={1.5} /></ActionButton>
            <ActionButton><Trash2 size={21} strokeWidth={2} /></ActionButton>
          </ActionBar>
        </Card>
      </TopRow>
      <BottomRow>
        <Card $w={557} $h={308}>
          <Win s={0.84} w={557} h={308} titleH={18.9} titlePl={5} navLeft={3} active="rect" tabsMl={-5} shift={0} dl={8} dr={8}>
            <SketchThree />
          </Win>
        </Card>
      </BottomRow>
    </Page>
  );
}
